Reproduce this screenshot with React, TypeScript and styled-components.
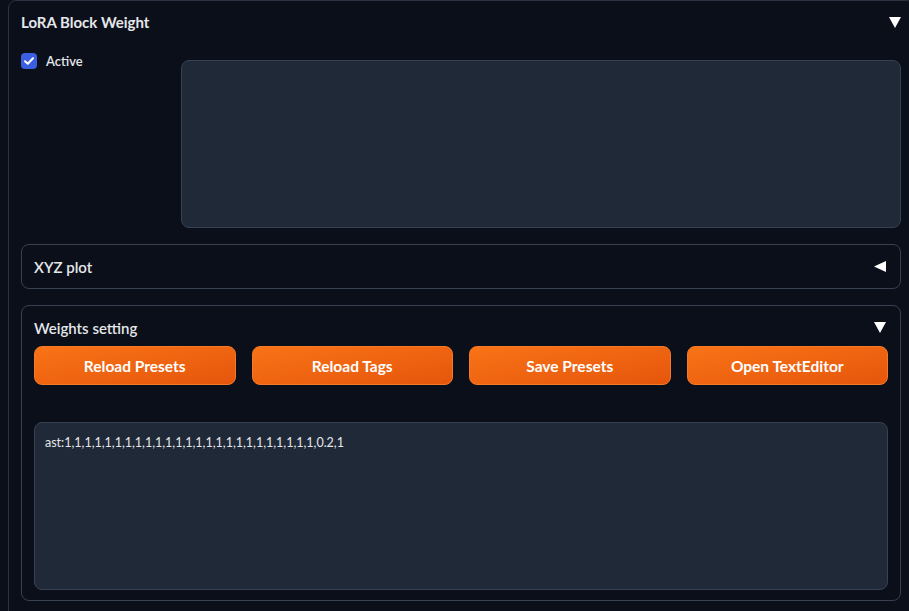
import React from "react";
import styled, { createGlobalStyle } from "styled-components";

const Global = createGlobalStyle`
  html, body { margin: 0; padding: 0; background: #0b0f19; overflow: hidden; }
  body { font-family: "Lato", "Noto Sans", sans-serif; color: #e5e7eb; }
  * { box-sizing: border-box; }
`;

const Page = styled.div`
  width: 909px;
  height: 611px;
  padding-left: 8px;
  overflow: hidden;
`;

const Outer = styled.div`
  width: 906px;
  min-height: 640px;
  border: 1px solid #2b3342;
  border-radius: 8px;
  padding: 0 12px 12px 12px;
  display: flex;
  flex-direction: column;
  gap: 16px;
`;

const Header = styled.div`
  display: flex;
  align-items: center;
  justify-content: space-between;
  height: 42px;
  font-size: 15px;
  font-weight: 700;
`;

const Tri = styled.svg`
  display: block;
  flex: none;
`;

const TopRow = styled.div`
  display: flex;
  gap: 16px;
  margin-top: 1px;
`;

const LeftCol = styled.div`
  width: 144px;
  margin-top: -7px;
`;

const CheckLabel = styled.label`
  display: flex;
  align-items: center;
  gap: 9px;
  font-size: 13px;
  font-weight: 600;
`;

const Box = styled.span`
  width: 16px;
  height: 16px;
  border-radius: 4px;
  background: #3b5fe0;
  display: flex;
  align-items: center;
  justify-content: center;
`;

const TextArea = styled.div<{ $h: number }>`
  flex: 1 1 auto;
  height: ${(p) => p.$h}px;
  background: #202937;
  border: 1px solid #374151;
  border-radius: 8px;
  padding: 12px 10px;
  font-size: 12.5px;
  color: #e5e7eb;
`;

const Panel = styled.div<{ $open?: boolean }>`
  border: 1px solid #374151;
  border-radius: 8px;
  padding: 0 12px ${(p) => (p.$open ? "10px" : "0")} 12px;
  display: flex;
  flex-direction: column;
`;

const PanelHead = styled.div<{ $h: number }>`
  display: flex;
  align-items: center;
  justify-content: space-between;
  height: ${(p) => p.$h}px;
  font-size: 15px;
  font-weight: 600;
  padding-right: 2px;
`;

const Buttons = styled.div`
  display: grid;
  grid-template-columns: repeat(4, 1fr);
  gap: 16px;
  margin-top: -3px;
`;

const Btn = styled.button`
  height: 39px;
  border: 1px solid #f47a2a;
  border-radius: 8px;
  background: linear-gradient(to bottom right, #f97316, #e5560c);
  color: #fff;
  font-family: "Lato", "Noto Sans", sans-serif;
  font-size: 15.5px;
  font-weight: 700;
  cursor: pointer;
`;

const Spacer = styled.div`
  height: 37px;
  flex: none;
`;

const Down = () => (
  <Tri width="12" height="11" viewBox="0 0 12 11">
    <polygon points="0,0 12,0 6,11" fill="#fff" />
  </Tri>
);

const Left = () => (
  <Tri width="12" height="11" viewBox="0 0 12 11">
    <polygon points="0,5.5 12,0 12,11" fill="#fff" />
  </Tri>
);

export default function App() {
  return (
    <>
      <Global />
      <Page>
        <Outer>
          <Header>
            <span>LoRA Block Weight</span>
            <Down />
          </Header>
          <TopRow>
            <LeftCol>
              <CheckLabel>
                <Box>
                  <svg width="10" height="8" viewBox="0 0 10 8">
                    <path d="M1 4.2 L3.8 6.8 L9 1.3" stroke="#fff" strokeWidth="2" fill="none" strokeLinecap="round" strokeLinejoin="round" />
                  </svg>
                </Box>
                Active
              </CheckLabel>
            </LeftCol>
            <TextArea $h={168} />
          </TopRow>
          <Panel>
            <PanelHead $h={43}>
              <span>XYZ plot</span>
              <Left />
            </PanelHead>
          </Panel>
          <Panel $open>
            <PanelHead $h={43}>
              <span>Weights setting</span>
              <Down />
            </PanelHead>
            <Buttons>
              <Btn>Reload Presets</Btn>
              <Btn>Reload Tags</Btn>
              <Btn>Save Presets</Btn>
              <Btn>Open TextEditor</Btn>
            </Buttons>
            <Spacer />
            <TextArea $h={168}>ast:1,1,1,1,1,1,1,1,1,1,1,1,1,1,1,1,1,1,1,1,1,1,1,1,1,0.2,1</TextArea>
          </Panel>
        </Outer>
      </Page>
    </>
  );
}
